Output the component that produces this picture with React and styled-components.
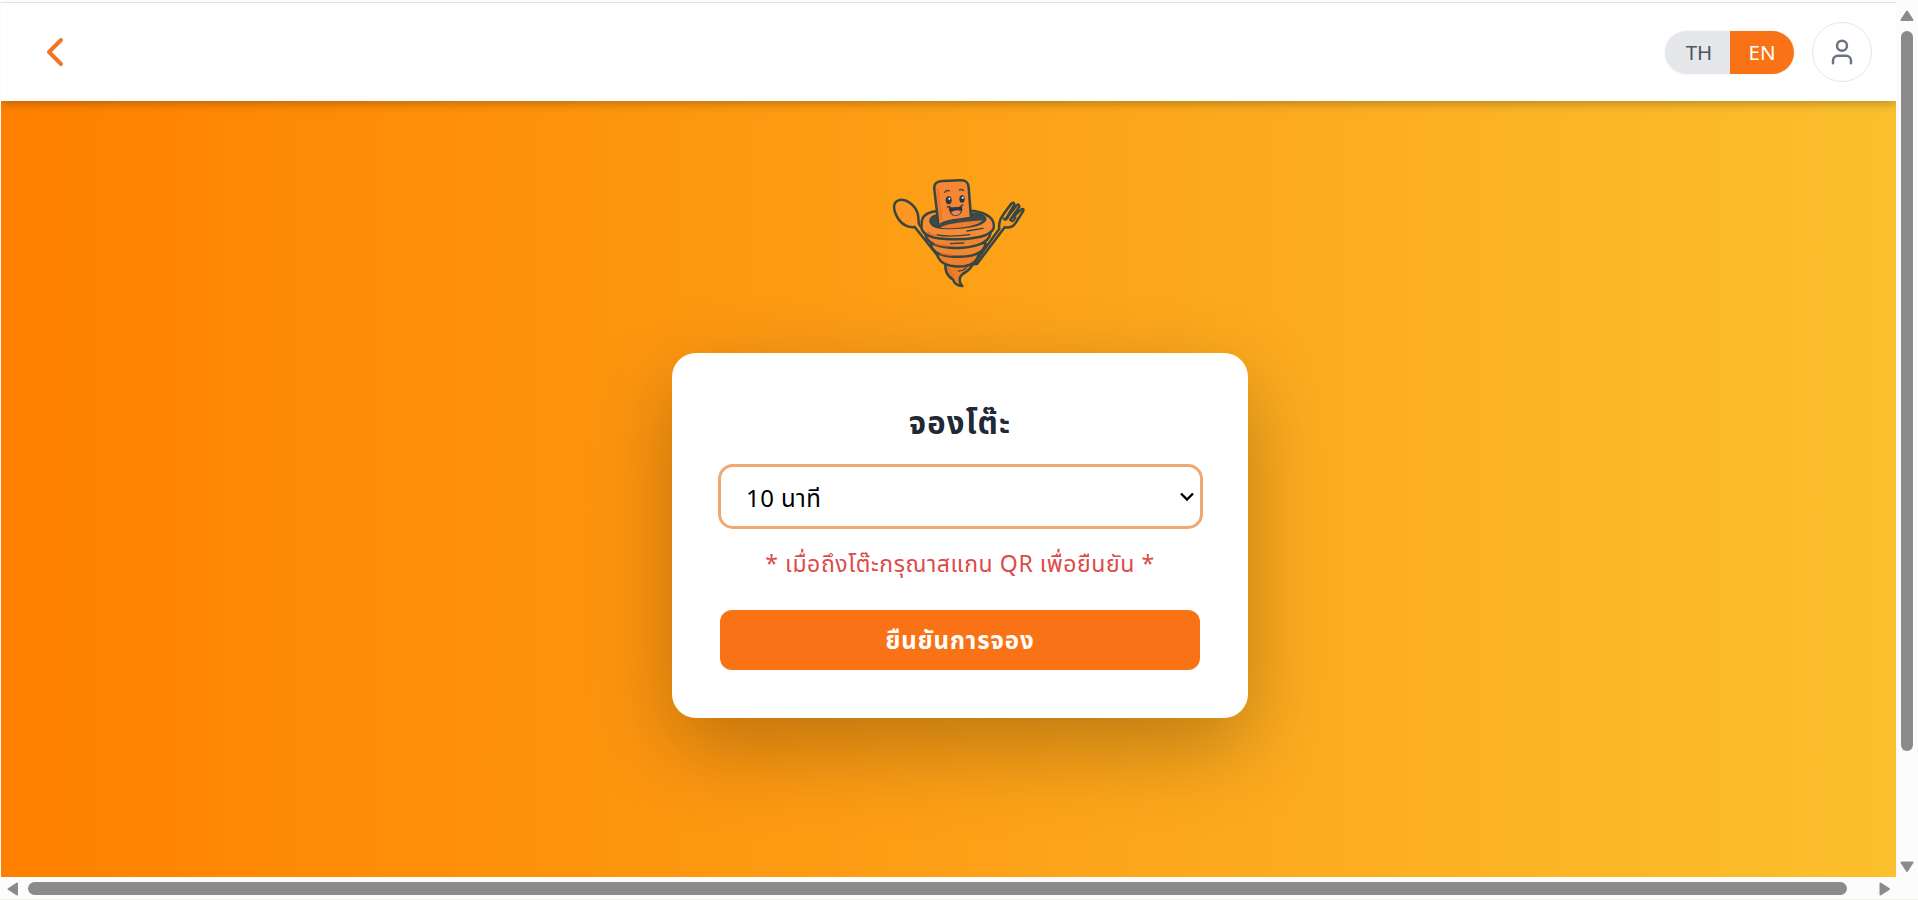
import React from "react";
import styled, { createGlobalStyle } from "styled-components";

const GlobalStyle = createGlobalStyle`
  * { box-sizing: border-box; }
  html, body { margin: 0; padding: 0; overflow: hidden; background: #fcfcfc; }
  body, button, select { font-family: "Noto Sans", "Noto Sans Thai", "Open Sans", sans-serif; }
`;

const Window = styled.div`
  width: 1918px;
  height: 900px;
  padding: 2px 0 1px 1px;
  display: grid;
  grid-template-columns: 1895px 21px;
  grid-template-rows: 875px 21px;
  border-bottom: 1px solid #f1f1ec;
  overflow: hidden;
`;

const Page = styled.div`
  display: flex;
  flex-direction: column;
  border-top: 1px solid #e2e2e2;
  overflow: hidden;
`;

const Header = styled.header`
  flex: none;
  height: 98px;
  padding: 0 24px 0 36px;
  display: flex;
  align-items: center;
  justify-content: space-between;
  background: #fff;
  box-shadow: 0 2px 10px rgba(0, 0, 0, 0.28);
  z-index: 1;
`;

const IconButton = styled.button`
  display: grid;
  place-items: center;
  width: ${(p) => p.$size}px;
  height: ${(p) => p.$size}px;
  padding: 0;
  border: ${(p) => (p.$ring ? "1px solid #e5e7eb" : "0")};
  border-radius: 50%;
  background: none;
  color: ${(p) => p.$color};
  svg { display: block; }
`;

const HeaderActions = styled.div`
  display: flex;
  align-items: center;
  gap: 18px;
`;

const LanguageSwitch = styled.div`
  display: flex;
  height: 43px;
  border-radius: 22px;
  overflow: hidden;
  box-shadow: 0 0 2px rgba(0, 0, 0, 0.12);
`;

const LanguageOption = styled.button`
  width: ${(p) => (p.$active ? 64 : 65)}px;
  padding: 0 0 0 ${(p) => (p.$active ? 0 : 3)}px;
  border: 0;
  font-size: 20.5px;
  color: ${(p) => (p.$active ? "#fff" : "#4b5563")};
  background: ${(p) => (p.$active ? "#f97316" : "#e5e7eb")};
`;

const Main = styled.main`
  flex: 1;
  display: flex;
  flex-direction: column;
  align-items: center;
  padding: 64px 0 0 23px;
  background: linear-gradient(90deg, #ff8000, #fbc02d);
`;

const Mascot = styled.svg`
  flex: none;
  display: block;
  width: 160px;
  height: 130px;
`;

const Card = styled.form`
  flex: none;
  width: 576px;
  height: 365px;
  margin-top: 58px;
  padding: 48px;
  display: flex;
  flex-direction: column;
  background: #fff;
  border-radius: 24px;
  box-shadow: 0 30px 84px rgba(0, 0, 0, 0.26);
`;

const Title = styled.h1`
  margin: 0 0 16px;
  height: 48px;
  font-size: 31px;
  line-height: 42px;
  font-weight: 700;
  letter-spacing: 1.2px;
  text-align: center;
  white-space: nowrap;
  color: #1f2937;
`;

const SelectBox = styled.label`
  flex: none;
  display: grid;
  grid-template-columns: 1fr 16px;
  align-items: center;
  width: 485px;
  height: 65px;
  margin: -1px 0 0 -2px;
  padding: 0 5px 0 25px;
  border: 3px solid #f0a873;
  border-radius: 15px;
`;

const Select = styled.select`
  appearance: none;
  width: 100%;
  height: 58px;
  padding: 2px 0 0;
  border: 0;
  outline: 0;
  background: none;
  font-size: 24px;
  letter-spacing: 0.4px;
  color: #000;
`;

const Notice = styled.p`
  margin: 16px 0 25px;
  height: 40px;
  font-size: 23px;
  line-height: 36px;
  letter-spacing: 0.58px;
  text-align: center;
  white-space: nowrap;
  color: #dc4b4b;
`;

const Submit = styled.button`
  flex: none;
  height: 60px;
  padding: 2px 0 0;
  border: 0;
  border-radius: 12px;
  background: #f97316;
  color: #fff;
  font-size: 24px;
  letter-spacing: 0.9px;
  font-weight: 700;
`;

const Scrollbar = styled.div`
  display: flex;
  flex-direction: ${(p) => (p.$vertical ? "column" : "row")};
  align-items: center;
  justify-content: space-between;
  padding: ${(p) => (p.$vertical ? "8px 0 5px 1px" : "2px 6px 0 6px")};
  background: #fcfcfc;
  svg { flex: none; display: block; fill: #8b8b8b; stroke: #8b8b8b; stroke-width: 2; stroke-linejoin: round; }
`;

const Thumb = styled.div`
  width: ${(p) => (p.$vertical ? "12px" : "1819px")};
  height: ${(p) => (p.$vertical ? "720px" : "13px")};
  margin: ${(p) => (p.$vertical ? "10px 0 auto" : "0 auto 0 10px")};
  border-radius: 7px;
  background: #8b8b8b;
`;

const arrows = {
  up: "M7 1.5 12.5 10H1.5Z",
  down: "M7 10 12.5 1.5H1.5Z",
  left: "M1.5 7 10 1.5V12.5Z",
  right: "M10 7 1.5 1.5V12.5Z",
};

function Arrow({ dir }) {
  const tall = dir === "left" || dir === "right";
  return (
    <svg width={tall ? 11 : 14} height={tall ? 14 : 11}>
      <path d={arrows[dir]} />
    </svg>
  );
}

function TornadoMascot() {
  return (
    <Mascot viewBox="0 0 480 390" fill="none" stroke="#37463f" strokeWidth="7.5" strokeLinecap="round" strokeLinejoin="round">
      {/* spoon */}
      <path fill="#fb9524" d="M104 186C90 188 69 183 55 162C38 135 38 112 55 106C77 98 105 120 113 145C118 163 113 174 119 181L190 271L184 286Z" />
      {/* fork */}
      <path fill="#fd9a1c" d="M281 298L358 191C355 175 361 161 371 147L393 117Q401 109 403 119L384 151L377 163L409 122Q417 114 418 125L391 164L424 133Q433 129 429 139L408 172C399 187 385 189 374 187L291 297Z" />
      <path strokeWidth="6" d="M371 160Q374 170 384 158M391 164Q397 176 407 157" />
      {/* funnel */}
      <path fill="#ed7e29" d="M198 291C192 318 205 335 219 344C223 356 233 363 247 363C236 353 237 338 246 329C257 319 275 315 279 294Z" />
      <path fill="#f07f2b" d="M171 254C168 281 185 300 223 304C264 308 290 295 297 266Z" />
      <path fill="#f18732" d="M154 229C149 255 173 273 222 275C275 278 313 265 317 235Z" />
      <path fill="#f08530" d="M136 199C134 229 160 244 211 248C274 252 329 237 332 202Z" />
      <path fill="#f58b35" d="M125 177C119 203 142 219 198 222C257 226 335 217 341 188C346 161 321 144 282 138H174C141 141 123 153 125 177Z" />
      <path fill="#3c4b49" strokeWidth="5" d="M166 151C149 157 146 169 155 178C164 188 183 191 207 190C251 190 309 184 317 164C318 150 296 145 272 145Z" />
      <path fill="#f17a2c" stroke="none" d="M181 188C204 174 271 169 308 166C291 186 220 194 181 188Z" />
      {/* face */}
      <path fill="#f68634" stroke="none" d="M176 184L163 73C161 55 170 48 187 47L240 44C258 43 265 51 266 68L273 157C246 164 208 161 184 174Z" />
      <path stroke="#ee6d29" strokeWidth="8" opacity=".6" d="M172 73L184 162" />
      <path d="M176 184L163 73C161 55 170 49 187 48L240 46C258 45 265 52 266 68L273 157" />
      <path strokeWidth="5" d="M183 176C208 161 246 164 273 157" />
      <g fill="#263b43" stroke="none">
        <ellipse cx="206" cy="106" rx="9" ry="12" />
        <ellipse cx="246" cy="102" rx="8" ry="11" />
        <path d="M206 126Q229 129 246 123C251 145 236 153 227 153C215 153 207 143 206 126Z" />
      </g>
      <path fill="#ef8063" stroke="none" d="M213 142Q228 132 243 138Q239 151 227 151Q218 151 213 142Z" />
      <circle cx="208" cy="101" r="3" fill="#fff" stroke="none" />
      <circle cx="248" cy="98" r="3" fill="#fff" stroke="none" />
      <path strokeWidth="4" d="M194 82Q200 74 208 78M238 75Q245 71 251 77M202 126L210 124M242 123L249 120" />
      {/* swirl shading */}
      <path strokeWidth="4" d="M171 210Q213 217 269 209M261 198L309 190M211 236L251 234M235 318Q251 318 259 308" />
      <path stroke="#ea6929" strokeWidth="6" opacity=".8" d="M144 202Q154 211 172 214M166 236Q180 242 203 242M184 266Q193 269 216 270M206 310Q209 324 220 332" />
    </Mascot>
  );
}

export default function App() {
  return (
    <>
      <GlobalStyle />
      <Window>
        <Page>
          <Header>
            <IconButton $size={36} $color="#f07422" aria-label="Back">
              <svg width="36" height="36" fill="none" stroke="currentColor" strokeWidth="4" strokeLinecap="round" strokeLinejoin="round">
                <path d="M24 6 12 18 24 30" />
              </svg>
            </IconButton>
            <HeaderActions>
              <LanguageSwitch>
                <LanguageOption>TH</LanguageOption>
                <LanguageOption $active>EN</LanguageOption>
              </LanguageSwitch>
              <IconButton $size={60} $ring $color="#6b7280" aria-label="Profile">
                <svg width="30" height="30" viewBox="0 0 24 24" fill="none" stroke="currentColor" strokeWidth="2" strokeLinecap="round" strokeLinejoin="round">
                  <circle cx="12" cy="7" r="4" />
                  <path d="M19.2 21v-2a4 4 0 0 0-4-4H8.8a4 4 0 0 0-4 4v2" />
                </svg>
              </IconButton>
            </HeaderActions>
          </Header>
          <Main>
            <TornadoMascot />
            <Card onSubmit={(e) => e.preventDefault()}>
              <Title>จองโต๊ะ</Title>
              <SelectBox>
                <Select defaultValue="10">
                  <option value="10">10 นาที</option>
                </Select>
                <svg width="16" height="12" fill="none" stroke="#000" strokeWidth="2.4">
                  <path d="M2 2.5 8 8.5 14 2.5" />
                </svg>
              </SelectBox>
              <Notice>* เมื่อถึงโต๊ะกรุณาสแกน QR เพื่อยืนยัน *</Notice>
              <Submit>ยืนยันการจอง</Submit>
            </Card>
          </Main>
        </Page>
        <Scrollbar $vertical>
          <Arrow dir="up" />
          <Thumb $vertical />
          <Arrow dir="down" />
        </Scrollbar>
        <Scrollbar>
          <Arrow dir="left" />
          <Thumb />
          <Arrow dir="right" />
        </Scrollbar>
      </Window>
    </>
  );
}
